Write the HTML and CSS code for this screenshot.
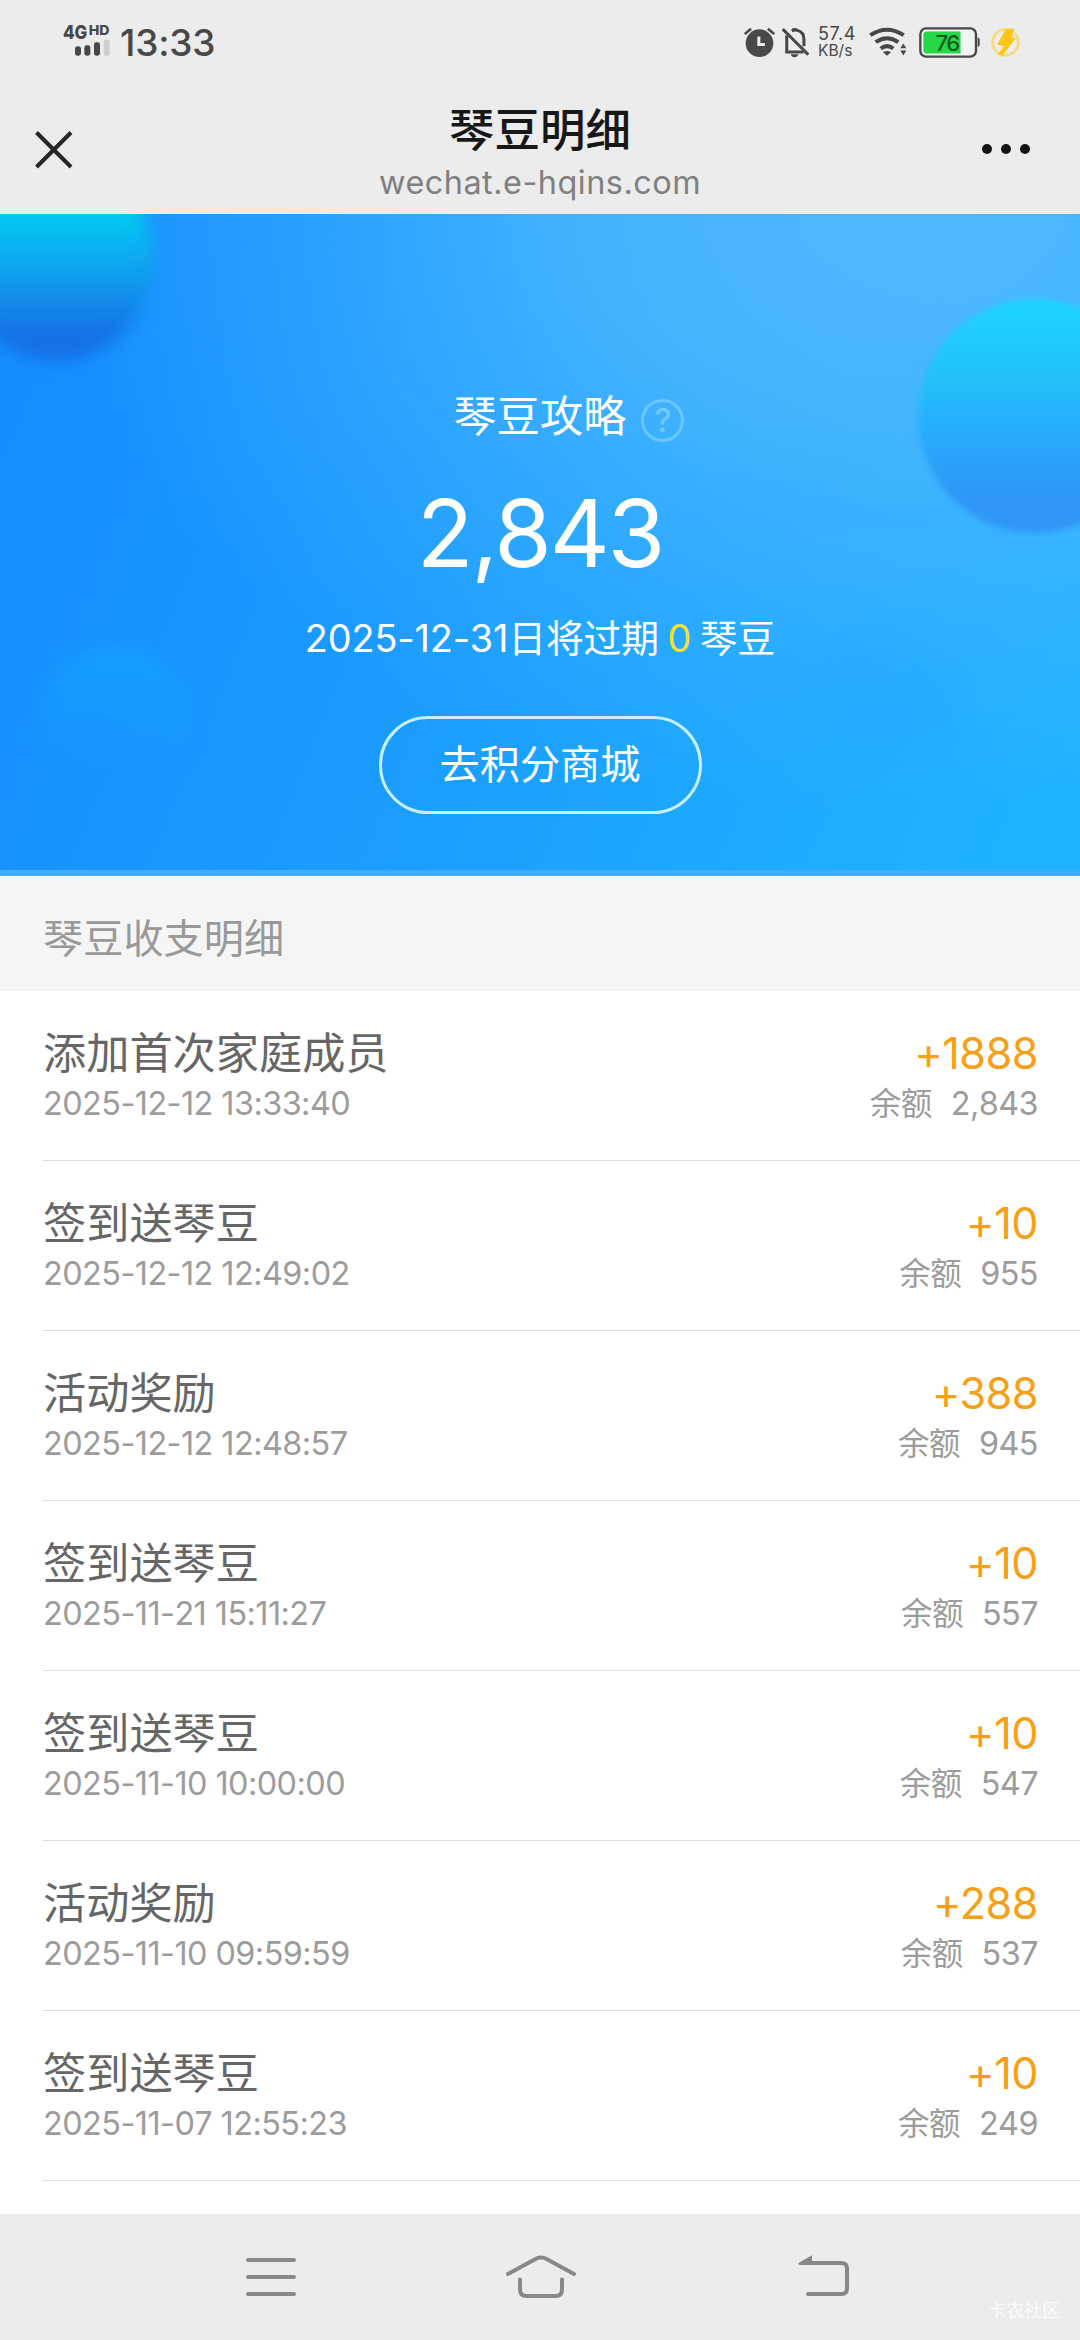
FILE: index.html
```
<!DOCTYPE html>
<html lang="zh-CN">
<head>
<meta charset="utf-8">
<title>琴豆明细</title>
<link rel="stylesheet" href="styles.css">
</head>
<body>
<div class="screen">
  <div class="status">
    <svg class="signal" viewBox="0 0 144 96" width="48" height="32">
      <text class="sig-net" x="0" y="46" textLength="73" lengthAdjust="spacingAndGlyphs">4G</text>
      <text class="sig-hd" x="77" y="32" textLength="62" lengthAdjust="spacingAndGlyphs">HD</text>
      <rect x="36" y="67" width="18" height="28" rx="8"/>
      <rect x="64" y="64" width="18" height="31" rx="7"/>
      <rect x="93" y="55" width="18" height="40" rx="7"/>
      <rect class="bar-off" x="122" y="47" width="18" height="48" rx="6"/>
    </svg>
    <span class="time">13:33</span>
    <div class="status-icons">
      <svg class="alarm" viewBox="68 82 92 92" width="31" height="31">
        <circle cx="114" cy="130" r="41" fill="#484848"/>
        <path d="M70 103 89 87M158 103 139 87" stroke="#484848" stroke-width="8"/>
        <path d="M112 110V134H130" stroke="#ececec" stroke-width="9" fill="none"/>
      </svg>
      <svg class="bell" viewBox="182 82 80 92" width="27" height="31">
        <g fill="none" stroke="#484848" stroke-width="9">
          <path d="M184 88 260 164"/>
          <path d="M196 107V156H246M211 94Q219 89 228 92Q247 97 247 118V139"/>
        </g>
        <path d="M208 163H230Q228 172 219 172Q210 172 208 163ZM212 86H226V94H212Z" fill="#484848"/>
      </svg>
      <div class="speed"><span class="speed-num">57.4</span><span class="speed-unit">KB/s</span></div>
      <svg class="wifi" viewBox="444 82 117 92" width="39" height="31">
        <g fill="none" stroke="#484848" stroke-width="12">
          <path d="M448 106Q498 73 548 106"/>
          <path d="M464 127Q498 103 532 127"/>
          <path d="M479 146Q498 132 517 146"/>
        </g>
        <path d="M486 157Q498 150 510 157L498 168ZM538 145 547 131 556 145ZM538 152 547 167 556 152Z" fill="#484848"/>
      </svg>
      <svg class="battery" viewBox="593 80 182 92" width="61" height="31">
        <rect x="597" y="84" width="166" height="84" rx="17" fill="#f4f4f4" stroke="#484848" stroke-width="7"/>
        <path d="M606 103Q606 93 616 93H717V159H616Q606 159 606 149Z" fill="#25d84a"/>
        <path d="M768 111Q774 111 774 118V132Q774 139 768 139Z" fill="#484848"/>
        <text class="level" x="642" y="150" textLength="74">76</text>
      </svg>
      <svg class="bolt" viewBox="807 80 94 92" width="31" height="31">
        <circle cx="854" cy="126" r="39" fill="none" stroke="#fbd24f" stroke-width="9" opacity=".65"/>
        <path d="M861 82 884 87 880 107 887 109 842 169 827 156 846 137 830 130Z" fill="#ececec"/>
        <path d="M856 84 881 84 873 110 885 113 844 167 830 162 850 137 829 132Z" fill="#fdc516"/>
      </svg>
    </div>
  </div>

  <header class="titlebar">
    <svg class="close" viewBox="0 0 38 38" width="38" height="38"><path d="M1.5 1.5 36 36M36 1.5 1.5 36"/></svg>
    <div class="heading">
      <h1>琴豆明细</h1>
      <p>wechat.e-hqins.com</p>
    </div>
    <svg class="more" viewBox="0 0 50 12" width="50" height="12"><circle cx="6" cy="6" r="5"/><circle cx="25" cy="6" r="5"/><circle cx="44" cy="6" r="5"/></svg>
  </header>

  <section class="banner">
    <i class="orb orb-tl"></i><i class="orb orb-r"></i><i class="orb orb-bl"></i><i class="orb orb-br"></i>
    <div class="guide"><span class="guide-text">琴豆攻略</span><span class="help">?</span></div>
    <div class="total">2,843</div>
    <div class="expiry">2025-12-31日将过期 <em>0</em> 琴豆</div>
    <a class="mall">去积分商城</a>
  </section>

  <h2 class="section-title">琴豆收支明细</h2>

  <ul class="records">
    <li><div class="row"><span class="name">添加首次家庭成员</span><span class="amount">+1888</span></div><div class="row sub"><span>2025-12-12 13:33:40</span><span class="balance"><b>余额</b>2,843</span></div></li>
    <li><div class="row"><span class="name">签到送琴豆</span><span class="amount">+10</span></div><div class="row sub"><span>2025-12-12 12:49:02</span><span class="balance"><b>余额</b>955</span></div></li>
    <li><div class="row"><span class="name">活动奖励</span><span class="amount">+388</span></div><div class="row sub"><span>2025-12-12 12:48:57</span><span class="balance"><b>余额</b>945</span></div></li>
    <li><div class="row"><span class="name">签到送琴豆</span><span class="amount">+10</span></div><div class="row sub"><span>2025-11-21 15:11:27</span><span class="balance"><b>余额</b>557</span></div></li>
    <li><div class="row"><span class="name">签到送琴豆</span><span class="amount">+10</span></div><div class="row sub"><span>2025-11-10 10:00:00</span><span class="balance"><b>余额</b>547</span></div></li>
    <li><div class="row"><span class="name">活动奖励</span><span class="amount">+288</span></div><div class="row sub"><span>2025-11-10 09:59:59</span><span class="balance"><b>余额</b>537</span></div></li>
    <li><div class="row"><span class="name">签到送琴豆</span><span class="amount">+10</span></div><div class="row sub"><span>2025-11-07 12:55:23</span><span class="balance"><b>余额</b>249</span></div></li>
  </ul>

  <nav class="navbar">
    <svg class="nav-menu" viewBox="0 0 50 44" width="50" height="44"><path d="M2 5H48M2 22H48M2 39H48"/></svg>
    <svg class="nav-home" viewBox="0 0 70 44" width="70" height="44"><path d="M2 19 29 4.200Q35 1 41 4.200L68 19M14 24.500V34.500Q14 41 20.500 41H49.500Q56 41 56 34.500V24.500"/></svg>
    <svg class="nav-back" viewBox="0 0 52 44" width="52" height="44"><path d="M13 8H43.500Q49 8 49 13.500V33.500Q49 39 43.500 39H10"/><path class="tip" d="M.5 8 14 .300V10H1.500Q0 9 .5 8Z"/></svg>
    <span class="mark">卡农社区</span>
  </nav>
</div>
</body>
</html>
```
FILE: styles.css
```
* { box-sizing: border-box; margin: 0; padding: 0; }
body {
  font-family: Inter, "Noto Sans CJK SC", sans-serif;
  background: #fff;
}
.screen {
  width: 1080px;
  height: 2340px;
  overflow: hidden;
  display: flex;
  flex-direction: column;
}

/* status bar */
.status {
  height: 90px;
  flex: none;
  background: #ececec;
  color: #484848;
  display: flex;
  align-items: flex-start;
  padding: 24px 59px 0 63px;
}
.signal { fill: #484848; overflow: visible; margin-right: 9px; }
.signal .bar-off { fill: #cfcfcf; }
.sig-net { font-size: 58px; font-weight: 800; }
.sig-hd { font-size: 40px; font-weight: 800; }
.time {
  font-size: 37px;
  font-weight: 500;
  line-height: 37px;
  letter-spacing: -.2px;
}
.status-icons {
  margin-left: auto;
  display: flex;
  padding-top: 3px;
}
.bell { margin-left: 7px; }
.speed {
  display: flex;
  flex-direction: column;
  width: 38px;
  margin: -3px 0 0 9px;
}
.speed-num { font-size: 18px; line-height: 20px; letter-spacing: .6px; }
.speed-unit { font-size: 15.500px; line-height: 14px; }
.wifi { margin-left: 13px; }
.battery { margin-left: 11px; }
.level { font-size: 66px; fill: #0c5a1c; font-weight: 500; }
.bolt { margin-left: 10px; }

/* title bar */
.titlebar {
  height: 124px;
  flex: none;
  background: #ececec;
  display: flex;
  justify-content: space-between;
  align-items: flex-start;
  padding: 11px 49px 0 35px;
}
.close { margin-top: 30px; fill: none; stroke: #262626; stroke-width: 4; }
.more { margin-top: 42px; fill: #141414; }
.heading { text-align: center; padding-left: 26px; }
.heading h1 {
  font-size: 45.500px;
  font-weight: 500;
  line-height: 59px;
  color: #171717;
}
.heading p {
  font-size: 32.400px;
  line-height: 45px;
  letter-spacing: .5px;
  color: #808080;
}

/* points banner */
.banner {
  position: relative;
  height: 662px;
  flex: none;
  overflow: hidden;
  display: flex;
  flex-direction: column;
  align-items: center;
  padding-top: 172px;
  color: #fff;
  border-bottom: 6px solid #42abff;
  background:
    radial-gradient(ellipse 850px 620px at 900px -20px, rgba(82,186,255,.95) 0, rgba(80,184,255,.8) 35%, rgba(79,184,255,.3) 72%, rgba(79,184,255,0) 100%),
    linear-gradient(112deg, #148fff 8%, #1a9bff 42%, #1fb3ff 95%);
}
.banner > div, .mall { position: relative; }
.orb { position: absolute; border-radius: 50%; }
.orb-tl {
  left: -42px; top: -58px; width: 195px; height: 205px;
  background: linear-gradient(#02c9f2 28%, #0fa0ee 57%, #1470e6 88%);
  filter: blur(8px);
}
.orb-r {
  left: 918px; top: 85px; width: 234px; height: 234px;
  background: linear-gradient(#1dd2ff 5%, #22c0fb 35%, #26aefb 55%, #2f96f6 85%);
  filter: blur(3px);
}
.orb-bl {
  left: 38px; top: 432px; width: 156px; height: 156px;
  background: linear-gradient(rgba(20,165,255,.6), rgba(20,150,255,0) 80%);
  filter: blur(7px);
}
.orb-br {
  left: 840px; top: 410px; width: 112px; height: 122px;
  background: linear-gradient(rgba(28,155,250,0), rgba(28,155,250,.2));
  filter: blur(14px);
}
.guide {
  display: grid;
  grid-template-columns: 1fr auto 1fr;
  width: 100%;
  line-height: 60px;
}
.guide-text { grid-column: 2; font-size: 43.200px; }
.help {
  width: 43px;
  height: 43px;
  margin: 13px 0 0 15px;
  border: 3px solid rgba(130,210,255,.65);
  border-radius: 50%;
  color: rgba(130,210,255,.8);
  font-size: 32px;
  font-weight: 500;
  line-height: 37px;
  text-align: center;
}
.total {
  margin-top: 32px;
  font-size: 93px;
  line-height: 110px;
  letter-spacing: -2px;
}
.expiry {
  margin-top: 25px;
  font-size: 37.800px;
  line-height: 50px;
  letter-spacing: -.1px;
  word-spacing: -2px;
}
.expiry em { font-style: normal; color: #f2e230; }
.mall {
  margin-top: 53px;
  width: 323px;
  height: 98px;
  border: 3px solid #c6efff;
  border-radius: 49px;
  font-size: 40.200px;
  line-height: 92px;
  text-align: center;
}

/* records */
.section-title {
  height: 115px;
  flex: none;
  padding-left: 43px;
  background: #f5f5f5;
  color: #999;
  font-size: 40.200px;
  font-weight: 400;
  line-height: 126px;
}
.records { flex: 1; min-height: 0; list-style: none; background: #fff; }
.records li {
  height: 170px;
  margin-left: 43px;
  padding: 36px 42px 0 0;
  border-bottom: 1px solid #dfdfdf;
}
.row {
  display: flex;
  justify-content: space-between;
  line-height: 52px;
  font-size: 43.200px;
  color: #666;
}
.amount { color: #f5a016; letter-spacing: -.5px; }
.sub {
  margin-top: 5px;
  font-size: 32.400px;
  line-height: 40px;
  letter-spacing: -.55px;
  color: #9c9c9c;
  font-kerning: none;
}
.balance b { font-weight: 400; font-size: 31.500px; margin-right: 19px; }

/* system navigation */
.navbar {
  position: relative;
  height: 126px;
  flex: none;
  background: #ececec;
  display: flex;
  padding: 41px 0 0 246px;
  fill: none;
  stroke: #888;
  stroke-width: 4;
  stroke-linecap: round;
}
.nav-home { margin-left: 210px; }
.nav-back { margin-left: 222px; }
.nav-back .tip { fill: #888; stroke: none; }
.mark {
  position: absolute;
  right: 20px;
  bottom: 16px;
  font-size: 18px;
  line-height: 26px;
  color: #fafafa;
}
```
